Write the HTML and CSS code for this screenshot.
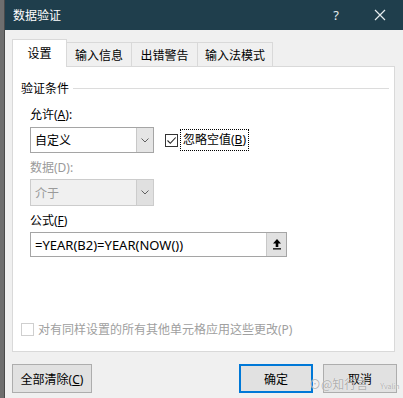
FILE: index.html
```html
<!DOCTYPE html>
<html lang="zh-CN">
<head>
  <meta charset="UTF-8" />
  <meta name="viewport" content="width=device-width, initial-scale=1.0" />
  <title>数据验证</title>
  <link rel="stylesheet" href="styles.css">
</head>
<body>
  <div class="screen">
    <div class="edge"></div>
    <div class="dialog">
      <div class="titlebar">
        <span class="title">数据验证</span>
        <span class="help">?</span>
        <svg class="close" width="12" height="12" viewBox="0 0 12 12">
          <path d="M1 1 L11 11 M11 1 L1 11" stroke="#e6ecef" stroke-width="1.2" fill="none" />
        </svg>
      </div>

      <div class="content">
        <div class="tabs">
          <div class="tab active">设置</div>
          <div class="tab">输入信息</div>
          <div class="tab">出错警告</div>
          <div class="tab">输入法模式</div>
        </div>

        <div class="panel">
          <div class="group-title">验证条件</div>

          <div class="fields">
            <div class="label">允许(<u>A</u>):</div>
            <div class="row">
              <div class="select">
                <span class="value">自定义</span>
                <span class="drop">
                  <svg width="8" height="5" viewBox="0 0 8 5"><path d="M0.5 0.5 L4 4 L7.5 0.5" stroke="#606060" fill="none" /></svg>
                </span>
              </div>
              <label class="check">
                <span class="box">
                  <svg width="11" height="11" viewBox="0 0 11 11"><path d="M1.5 5.5 L4.3 8.3 L9.7 2.5" stroke="#222" stroke-width="1.1" fill="none" /></svg>
                </span>
                <span class="focus">忽略空值(<u>B</u>)</span>
              </label>
            </div>

            <div class="label label-off">数据(D):</div>
            <div class="select select-off">
              <span class="value">介于</span>
              <span class="drop">
                <svg width="8" height="5" viewBox="0 0 8 5"><path d="M0.5 0.5 L4 4 L7.5 0.5" stroke="#606060" fill="none" /></svg>
              </span>
            </div>

            <div class="label label-formula">公式(<u>F</u>)</div>
            <div class="formula">
              <span class="formula-text">=YEAR(B2)=YEAR(NOW())</span>
              <span class="collapse">
                <svg width="10" height="12" viewBox="0 0 10 12">
                  <path d="M5 1 L9 5.5 L6.3 5.5 L6.3 9 L3.7 9 L3.7 5.5 L1 5.5 Z" fill="#000" />
                  <rect x="1" y="10.2" width="8" height="1.3" fill="#000" />
                </svg>
              </span>
            </div>
          </div>

          <div class="apply">
            <span class="box box-off"></span>
            <span>对有同样设置的所有其他单元格应用这些更改(P)</span>
          </div>
        </div>

        <div class="actions">
          <button class="btn btn-clear">全部清除(<u>C</u>)</button>
          <div class="spacer"></div>
          <button class="btn btn-ok">确定</button>
          <button class="btn btn-cancel">取消</button>
          <div class="watermark">⊙@知行言<small>Yvalin</small></div>
        </div>
      </div>
    </div>
  </div>
</body>
</html>
```

FILE: styles.css
```css
html, body {
  margin: 0;
  padding: 0;
  width: 403px;
  height: 398px;
  overflow: hidden;
}
body {
  font-family: "Noto Sans", "Noto Sans CJK SC", sans-serif;
  font-size: 12px;
  color: #000;
  background: #f0f0f0;
}
u {
  text-decoration: underline;
  text-underline-offset: 1px;
}
.screen {
  display: flex;
  height: 398px;
}
.edge {
  width: 5px;
  background: #6e6e6e;
  border-right: 1px solid #4a4a4a;
  box-sizing: border-box;
}
.dialog {
  flex: 1;
  display: flex;
  flex-direction: column;
  background: #f0f0f0;
}
.titlebar {
  height: 30px;
  background: #1f3e4c;
  color: #fff;
  display: flex;
  align-items: center;
  padding-left: 8px;
}
.title {
  font-size: 12px;
  flex: 1;
}
.help {
  font-size: 13px;
  color: #e6ecef;
  margin-right: 35px;
}
.close {
  margin-right: 17px;
}
.content {
  position: relative;
  padding: 9px 8px 0 7px;
}
.tabs {
  display: flex;
  align-items: flex-end;
  height: 27px;
  position: relative;
  z-index: 1;
}
.tab {
  height: 24px;
  padding: 0;
  white-space: nowrap;
  box-sizing: border-box;
  border: 1px solid #d9d9d9;
  border-bottom: none;
  border-left: none;
  background: #f0f0f0;
  display: flex;
  align-items: center;
  justify-content: center;
  font-family: "Noto Sans CJK SC", sans-serif;
}
.tab:nth-child(2) { width: 65px; }
.tab:nth-child(3) { width: 66px; }
.tab:nth-child(4) { width: 75px; }
.tab.active {
  width: 55px;
  height: 28px;
  margin-bottom: -1px;
  background: #fff;
  border-left: 1px solid #d9d9d9;
  padding-bottom: 2px;
}
.panel {
  height: 286px;
  box-sizing: border-box;
  background: #fff;
  border: 1px solid #d9d9d9;
  padding: 13px 5px 0 8px;
  display: flex;
  flex-direction: column;
}
.group-title {
  height: 16px;
  line-height: 16px;
  display: flex;
  align-items: center;
  gap: 4px;
  font-family: "Noto Sans CJK SC", sans-serif;
}
.group-title::after {
  content: "";
  flex: 1;
  height: 1px;
  background: #dcdcdc;
}
.fields {
  margin-left: 9px;
  display: flex;
  flex-direction: column;
}
.label {
  height: 16px;
  line-height: 16px;
  margin-top: 11px;
  margin-bottom: 4px;
}
.label-off {
  color: #9a9a9a;
  margin-top: 7px;
  margin-bottom: 3px;
}
.label-formula {
  margin-top: 7px;
  margin-bottom: 3px;
}
.row {
  display: flex;
  align-items: center;
}
.select {
  width: 124px;
  height: 26px;
  box-sizing: border-box;
  border: 1px solid #a5a5a5;
  background: #fff;
  display: flex;
  align-items: stretch;
}
.select .value {
  flex: 1;
  padding-left: 4px;
  display: flex;
  align-items: center;
  font-size: 12px;
}
.drop {
  width: 16px;
  background: #e5e5e5;
  border-left: 1px solid #c8c8c8;
  display: flex;
  align-items: center;
  justify-content: center;
}
.select-off {
  height: 27px;
  background: #f0f0f0;
  border-color: #cccccc;
  color: #9a9a9a;
}
.select-off .drop {
  background: #e0e0e0;
  border-left-color: #cccccc;
}
.check {
  display: flex;
  align-items: center;
  margin-left: 11px;
  gap: 2px;
}
.box {
  width: 13px;
  height: 13px;
  box-sizing: border-box;
  border: 1px solid #333;
  background: #fff;
  display: flex;
  align-items: center;
  justify-content: center;
}
.focus {
  border: 1px dotted #000;
  padding: 1px 2px;
  height: 18px;
  line-height: 18px;
}
.formula {
  width: 257px;
  height: 25px;
  box-sizing: border-box;
  border: 1px solid #a5a5a5;
  display: flex;
}
.formula-text {
  flex: 1;
  padding-left: 4px;
  display: flex;
  align-items: center;
  font-size: 13px;
}
.collapse {
  width: 20px;
  background: #e1e1e1;
  border-left: 1px solid #c8c8c8;
  display: flex;
  justify-content: center;
  padding-top: 5px;
  box-sizing: border-box;
}
.apply {
  margin-top: auto;
  margin-bottom: 14px;
  display: flex;
  align-items: center;
  gap: 4px;
  color: #a0a0a0;
  height: 16px;
}
.box-off {
  border-color: #cfcfcf;
}
.actions {
  display: flex;
  margin-top: 12px;
  margin-right: -2px;
  position: relative;
}
.spacer {
  flex: 1;
}
.btn {
  height: 29px;
  box-sizing: border-box;
  border: 1px solid #adadad;
  background: #e1e1e1;
  font-family: "Noto Sans", "Noto Sans CJK SC", sans-serif;
  font-size: 12px;
  padding: 0;
  color: #000;
}
.btn-clear {
  width: 80px;
}
.btn-ok {
  width: 74px;
  border: 2px solid #0078d7;
  margin-right: 10px;
}
.btn-cancel {
  width: 74px;
}
.watermark {
  position: absolute;
  left: 297px;
  top: 11px;
  font-family: "Noto Sans CJK SC", sans-serif;
  font-size: 12px;
  color: rgba(150, 150, 150, 0.75);
  text-shadow: 0 0 1px #fff;
  white-space: nowrap;
}
.watermark small {
  font-size: 7px;
  margin-left: 12px;
}
```
